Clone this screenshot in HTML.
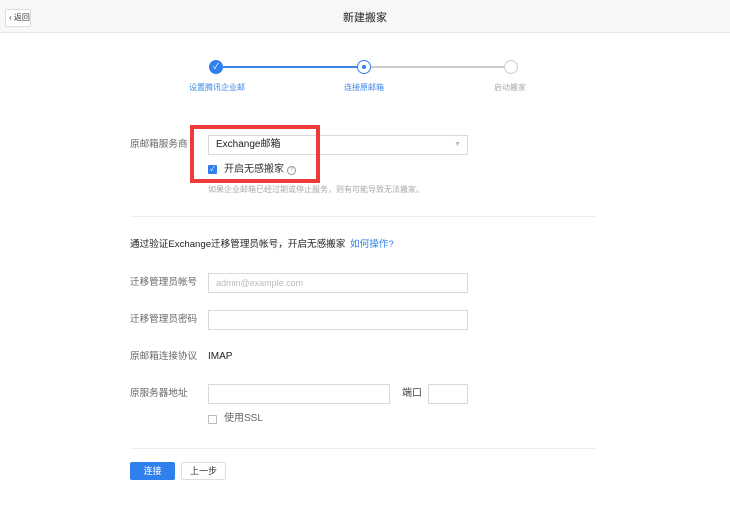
<!DOCTYPE html><html><head><meta charset="utf-8"><style>
*{margin:0;padding:0;box-sizing:border-box}
body{width:730px;height:506px;background:#fff;font-family:"Liberation Sans","Noto Sans CJK SC",sans-serif;position:relative;overflow:hidden;color:#333}
.a{position:absolute}
.hdr{left:0;top:0;width:730px;height:33px;background:#f7f7f7;border-bottom:1px solid #e6e6e6}
.lbl{font-size:9.6px;color:#666;left:130px;line-height:12px}
.inp{border:1px solid #d9d9d9;background:#fff;height:20px}
.t{font-size:9px;line-height:10px;white-space:nowrap}
</style></head><body>
<div class="a hdr"></div>
<div class="a" style="left:5px;top:9px;width:26px;height:18px;border:1px solid #ddd;background:#fff;border-radius:2px;font-size:8px;line-height:16px;padding-left:3px;color:#333">‹ 返回</div>
<div class="a" style="left:0;width:730px;top:11px;text-align:center;font-size:11px;line-height:14px;color:#222">新建搬家</div>
<div class="a" style="left:223px;top:66px;width:134px;height:2px;background:#3a86e8"></div>
<div class="a" style="left:371px;top:66px;width:133px;height:2px;background:#ccc"></div>
<div class="a" style="left:209px;top:60px;width:14px;height:14px;border-radius:50%;background:#2f80ed;color:#fff;font-size:8px;text-align:center;line-height:14px">✓</div>
<div class="a" style="left:357px;top:60px;width:14px;height:14px;border-radius:50%;border:1.5px solid #2f80ed;background:#fff"><div class="a" style="left:3.5px;top:3.5px;width:4px;height:4px;border-radius:50%;background:#2f80ed"></div></div>
<div class="a" style="left:504px;top:60px;width:14px;height:14px;border-radius:50%;border:1.5px solid #ccc;background:#fff"></div>
<div class="a t" style="left:189px;top:83px;color:#3a86e8;font-size:8px">设置腾讯企业邮</div>
<div class="a t" style="left:344px;top:83px;color:#3a86e8;font-size:8px">连接原邮箱</div>
<div class="a t" style="left:494px;top:83px;color:#aaa;font-size:8px">启动搬家</div>
<div class="a lbl" style="top:139px">原邮箱服务商</div>
<div class="a inp" style="left:208px;top:135px;width:260px;font-size:10px;line-height:18px;padding-left:7px;color:#222">Exchange邮箱<span class="a" style="right:6px;top:0;color:#bbb;font-size:7px">▼</span></div>
<div class="a" style="left:208px;top:165px;width:9px;height:9px;background:#2f80ed;border-radius:1px;color:#fff;font-size:7px;line-height:9px;text-align:center">✓</div>
<div class="a" style="left:224px;top:164px;font-size:10px;line-height:12px">开启无感搬家 <span style="display:inline-block;width:9px;height:9px;border:1px solid #999;border-radius:50%;font-size:6px;line-height:7px;text-align:center;color:#999;vertical-align:1px">?</span></div>
<div class="a" style="left:190px;top:125px;width:130px;height:58px;border:4px solid #f03a3a"></div>
<div class="a t" style="left:208px;top:185px;color:#aaa;font-size:8px">如果企业邮箱已经过期或停止服务，则有可能导致无法搬家。</div>
<div class="a" style="left:130px;top:216px;width:466px;height:1px;background:#eee"></div>
<div class="a" style="left:130px;top:239px;font-size:9.6px;line-height:12px;color:#222;white-space:nowrap">通过验证Exchange迁移管理员帐号，开启无感搬家 <span style="color:#2f80ed;margin-left:2px">如何操作?</span></div>
<div class="a lbl" style="top:277px">迁移管理员帐号</div>
<div class="a inp" style="left:208px;top:273px;width:260px;font-size:9px;line-height:18px;padding-left:7px;color:#bbb">admin@example.com</div>
<div class="a lbl" style="top:314px">迁移管理员密码</div>
<div class="a inp" style="left:208px;top:310px;width:260px"></div>
<div class="a lbl" style="top:351px">原邮箱连接协议</div>
<div class="a" style="left:208px;top:351px;font-size:10px;line-height:12px;color:#222">IMAP</div>
<div class="a lbl" style="top:388px">原服务器地址</div>
<div class="a inp" style="left:208px;top:384px;width:182px"></div>
<div class="a" style="left:402px;top:388px;font-size:10px;line-height:12px;color:#444">端口</div>
<div class="a inp" style="left:428px;top:384px;width:40px"></div>
<div class="a" style="left:208px;top:415px;width:9px;height:9px;border:1px solid #bbb;border-radius:1px"></div>
<div class="a" style="left:224px;top:413px;font-size:10px;line-height:12px;color:#666">使用SSL</div>
<div class="a" style="left:130px;top:448px;width:466px;height:1px;background:#eee"></div>
<div class="a" style="left:130px;top:462px;width:45px;height:18px;background:#2f80ed;border-radius:2px;color:#fff;font-size:9px;line-height:18px;text-align:center">连接</div>
<div class="a" style="left:181px;top:462px;width:45px;height:18px;border:1px solid #ddd;border-radius:2px;color:#333;font-size:9px;line-height:16px;text-align:center">上一步</div>
</body></html>
